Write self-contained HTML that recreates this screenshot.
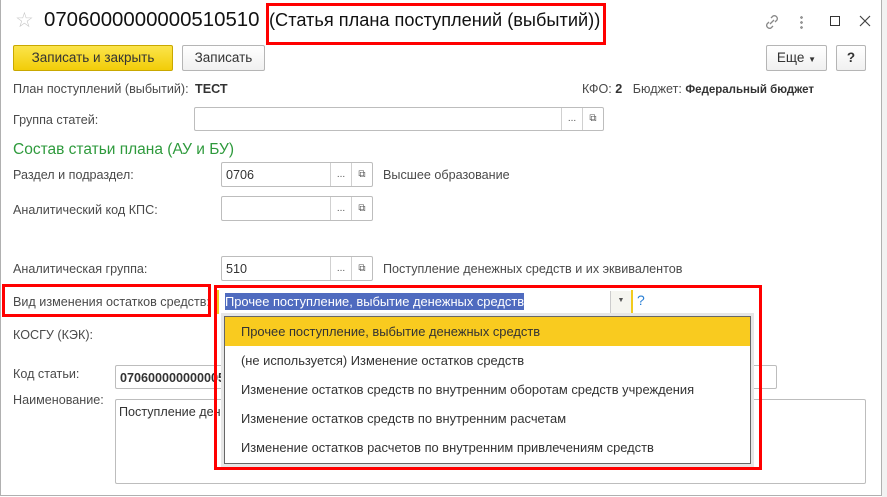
<!DOCTYPE html>
<html><head><meta charset="utf-8"><style>
*{box-sizing:border-box;margin:0;padding:0}
body{width:887px;height:497px;overflow:hidden;background:#fff;font-family:"Liberation Sans",Arial,sans-serif;font-size:12.6px;color:#4a4a4a;position:relative}
.a{position:absolute;white-space:nowrap}
.inp{position:absolute;border:1px solid #bdbdbd;border-radius:2px;background:#fff}
.btn{position:absolute;border:1px solid #b5b5b5;border-radius:2px;background:linear-gradient(#fff,#f0f0f0);font-size:13.5px;color:#333;text-align:center}
.sb{position:absolute;top:0;bottom:0;width:21px;border-left:1px solid #d0d0d0;text-align:center;font-size:10px;color:#555}
.red{position:absolute;border:3px solid #f00}
.it{height:29px;line-height:29px;padding-left:16px;color:#333;font-size:12.9px}
</style></head><body>
<div style="position:absolute;left:0;top:0;width:882px;height:496px;border:1px solid #b0b0b0;border-top:none"></div>
<div style="position:absolute;left:882px;top:0;width:5px;height:497px;background:#f2f2f2"></div>
<div class="a" style="left:15px;top:8px;font-size:21px;color:#c8c8c8">☆</div>
<div class="a" style="left:44px;top:9px;font-size:20.4px;color:#111">0706000000000510510</div>
<div class="a" style="left:269px;top:10px;font-size:18.2px;color:#111">(Статья плана поступлений (выбытий))</div>
<div class="red" style="left:266px;top:3px;width:340px;height:42px"></div>
<svg class="a" style="left:763px;top:13px" width="18" height="18" viewBox="0 0 18 18"><g fill="none" stroke="#888" stroke-width="1.3"><path d="M8 5l2-2a3 3 0 014 4l-2 2"/><path d="M10 13l-2 2a3 3 0 01-4-4l2-2"/><path d="M7 11l4-4"/></g></svg>
<div class="a" style="left:800px;top:15px;width:3px;height:14px;background:radial-gradient(circle,#999 1.3px,transparent 1.5px) 0 0/3px 5px"></div>
<div class="a" style="left:830px;top:16px;width:10px;height:10px;border:1.3px solid #333"></div>
<svg class="a" style="left:859px;top:15px" width="12" height="12" viewBox="0 0 12 12"><path d="M1 1l10 10M11 1L1 11" stroke="#444" stroke-width="1.2"/></svg>
<div class="btn" style="left:13px;top:45px;width:160px;height:26px;background:linear-gradient(#fbe44b,#f2cd08);border-color:#c9a800;line-height:24px;color:#333">Записать и закрыть</div>
<div class="btn" style="left:182px;top:45px;width:83px;height:26px;line-height:24px">Записать</div>
<div class="btn" style="left:766px;top:45px;width:61px;height:26px;line-height:24px">Еще <span style="font-size:8px">▼</span></div>
<div class="btn" style="left:836px;top:45px;width:30px;height:26px;line-height:24px;font-weight:bold">?</div>
<div class="a" style="left:13px;top:82px">План поступлений (выбытий):</div>
<div class="a" style="left:195px;top:82px;font-weight:bold;color:#333">ТЕСТ</div>
<div class="a" style="left:582px;top:82px">КФО: <b style="color:#333">2</b>&nbsp;&nbsp; Бюджет: <b style="color:#333;font-size:11.5px">Федеральный бюджет</b></div>
<div class="a" style="left:13px;top:113px">Группа статей:</div>
<div class="inp" style="left:194px;top:107px;width:410px;height:24px"><div class="sb" style="right:21px;line-height:22px">...</div><div class="sb" style="right:0;line-height:22px">⧉</div></div>
<div class="a" style="left:13px;top:141px;font-size:15.5px;color:#2e9a3c">Состав статьи плана (АУ и БУ)</div>
<div class="a" style="left:13px;top:168px">Раздел и подраздел:</div>
<div class="inp" style="left:221px;top:162px;width:152px;height:25px"><span class="a" style="left:4px;top:5px;color:#333">0706</span><div class="sb" style="right:21px;line-height:23px">...</div><div class="sb" style="right:0;line-height:23px">⧉</div></div>
<div class="a" style="left:383px;top:168px">Высшее образование</div>
<div class="a" style="left:13px;top:203px">Аналитический код КПС:</div>
<div class="inp" style="left:221px;top:196px;width:152px;height:25px"><div class="sb" style="right:21px;line-height:23px">...</div><div class="sb" style="right:0;line-height:23px">⧉</div></div>
<div class="a" style="left:13px;top:262px">Аналитическая группа:</div>
<div class="inp" style="left:221px;top:256px;width:152px;height:25px"><span class="a" style="left:4px;top:5px;color:#333">510</span><div class="sb" style="right:21px;line-height:23px">...</div><div class="sb" style="right:0;line-height:23px">⧉</div></div>
<div class="a" style="left:383px;top:262px">Поступление денежных средств и их эквивалентов</div>
<div class="a" style="left:13px;top:295px;width:203px;overflow:hidden">Вид изменения остатков средств:</div>
<div class="red" style="left:2px;top:284px;width:209px;height:33px"></div>
<div class="a" style="left:217px;top:290px;width:416px;height:24px;border-left:2px solid #f2cb1d;border-right:2px solid #f2cb1d;background:#fff"></div>
<div class="a" style="left:225px;top:293px;width:299px;height:17px;background:#4f6bbf;color:#fff;font-size:12.9px;line-height:17px;overflow:hidden">Прочее поступление, выбытие денежных средств</div>
<div class="a" style="left:610px;top:291px;width:21px;height:22px;border-left:1px solid #ccc;background:#f5f5f0;text-align:center;font-size:7px;line-height:20px;color:#555">▼</div>
<div class="a" style="left:637px;top:292px;font-size:14px;color:#2a7fd4">?</div>
<div class="a" style="left:13px;top:328px">КОСГУ (КЭК):</div>
<div class="a" style="left:13px;top:367px">Код статьи:</div>
<div class="inp" style="left:115px;top:365px;width:662px;height:24px"><span class="a" style="left:4px;top:5px;font-weight:bold;color:#333">07060000000000510510</span></div>
<div class="a" style="left:13px;top:393px">Наименование:</div>
<div class="inp" style="left:115px;top:399px;width:751px;height:85px"><span class="a" style="left:3px;top:5px;color:#333">Поступление денежных средств</span></div>
<div class="a" style="left:224px;top:316px;width:527px;height:148px;border:1px solid #666;background:#fff;box-shadow:0 0 0 3px #e6e6e6">
<div class="it" style="background:#f9cb1f">Прочее поступление, выбытие денежных средств</div>
<div class="it">(не используется) Изменение остатков средств</div>
<div class="it">Изменение остатков средств по внутренним оборотам средств учреждения</div>
<div class="it">Изменение остатков средств по внутренним расчетам</div>
<div class="it">Изменение остатков расчетов по внутренним привлечениям средств</div>
</div>
<div class="red" style="left:214px;top:285px;width:548px;height:185px"></div>
</body></html>
